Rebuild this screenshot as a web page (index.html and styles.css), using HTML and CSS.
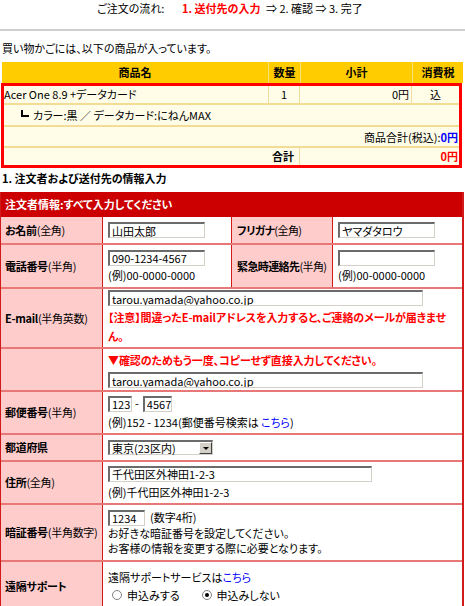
FILE: index.html
```html
<!DOCTYPE html>
<html lang="ja">
<head>
<meta charset="utf-8">
<title>ご注文</title>
<link rel="stylesheet" href="styles.css">
</head>
<body>
<div class="steps">
  <span class="steps-label">ご注文の流れ:</span>
  <span class="step-now">1. 送付先の入力</span>
  <span class="step">⇒ 2. 確認 ⇒ 3. 完了</span>
</div>
<div class="rule"></div>
<p class="cart-intro">買い物かごには、以下の商品が入っています。</p>
<div class="cart">
  <div class="cart-head">
    <div class="h-name">商品名</div>
    <div class="h-qty">数量</div>
    <div class="h-sub">小計</div>
    <div class="h-tax">消費税</div>
  </div>
  <div class="cart-body">
    <div class="row r-item">
      <div class="c-name">Acer One 8.9 +データカード</div>
      <div class="c-qty">1</div>
      <div class="c-sub">0円</div>
      <div class="c-tax">込</div>
    </div>
    <div class="row r-opt"><span class="corner"></span>カラー:黒 ／ データカード:にねんMAX</div>
    <div class="row r-sum">商品合計(税込):<b class="blue">0円</b></div>
    <div class="row r-total">
      <div class="t-label">合計</div>
      <div class="t-val">0円</div>
    </div>
  </div>
</div>

<h2 class="section">1. 注文者および送付先の情報入力</h2>
<div class="form">
  <div class="form-head">注文者情報:すべて入力してください</div>

  <div class="frow two r-name">
    <div class="lab"><b>お名前</b>(全角)</div>
    <div class="fld"><input class="in w-mid" value="山田太郎"></div>
    <div class="lab lab2"><b>フリガナ</b>(全角)</div>
    <div class="fld"><input class="in w-mid" value="ヤマダタロウ"></div>
  </div>

  <div class="frow two r-tel">
    <div class="lab"><b>電話番号</b>(半角)</div>
    <div class="fld"><input class="in w-mid" value="090-1234-4567"><div class="note">(例)00-0000-0000</div></div>
    <div class="lab lab2"><b>緊急時連絡先</b>(半角)</div>
    <div class="fld"><input class="in w-mid" value=""><div class="note">(例)00-0000-0000</div></div>
  </div>

  <div class="frow one r-mail">
    <div class="lab"><b>E-mail</b>(半角英数)</div>
    <div class="fld">
      <input class="in w-wide" value="tarou.yamada@yahoo.co.jp">
      <div class="warn">【注意】間違ったE-mailアドレスを入力すると、ご連絡のメールが届きませ<br>ん。</div>
    </div>
  </div>

  <div class="frow one r-conf">
    <div class="lab"></div>
    <div class="fld">
      <div class="warn">▼確認のためもう一度、コピーせず直接入力してください。</div>
      <input class="in w-wide" value="tarou.yamada@yahoo.co.jp">
    </div>
  </div>

  <div class="frow one r-zip">
    <div class="lab"><b>郵便番号</b>(半角)</div>
    <div class="fld">
      <div class="zip"><input class="in w-z1" value="123"><span class="dash">-</span><input class="in w-z2" value="4567"></div>
      <div class="note">(例)152 - 1234(郵便番号検索は <a class="link" href="#">こちら</a>)</div>
    </div>
  </div>

  <div class="frow one r-pref">
    <div class="lab"><b>都道府県</b></div>
    <div class="fld">
      <div class="select"><span class="sel-text">東京(23区内)</span><span class="sel-btn"><span class="sel-arrow"></span></span></div>
    </div>
  </div>

  <div class="frow one r-addr">
    <div class="lab"><b>住所</b>(全角)</div>
    <div class="fld">
      <input class="in w-addr" value="千代田区外神田1-2-3">
      <div class="note">(例)千代田区外神田1-2-3</div>
    </div>
  </div>

  <div class="frow one r-pin">
    <div class="lab"><b>暗証番号</b>(半角数字)</div>
    <div class="fld">
      <div class="pin"><input class="in w-pin" value="1234"><span class="pin-note">(数字4桁)</span></div>
      <div class="note">お好きな暗証番号を設定してください。</div>
      <div class="note">お客様の情報を変更する際に必要となります。</div>
    </div>
  </div>

  <div class="frow one r-remote">
    <div class="lab"><b>遠隔サポート</b></div>
    <div class="fld">
      <div class="note">遠隔サポートサービスは<a class="link" href="#">こちら</a></div>
      <div class="radios">
        <label class="radio"><span class="rb"></span>申込みする</label>
        <label class="radio"><span class="rb on"></span>申込みしない</label>
      </div>
    </div>
  </div>
</div>
</body>
</html>
```

FILE: styles.css
```css
* { box-sizing: border-box; }
html, body { margin: 0; padding: 0; background: #fff; }
body {
  font-family: "Noto Sans CJK JP", "Noto Sans", sans-serif;
  font-size: 11px;
  line-height: 15px;
  color: #000;
  font-feature-settings: "palt";
  width: 465px;
  overflow: hidden;
}
b { font-weight: bold; }

.steps {
  height: 29px;
  padding: 1px 0 0 97px;
  display: flex;
  white-space: nowrap;
}
.steps-label { width: 85px; }
.step-now { color: #ff0000; font-weight: bold; width: 84px; }

.rule { height: 2px; background: #cfcfcf; }

.cart-intro { margin: 10px 0 0 2px; height: 21px; }

.cart { width: 463px; }
.cart-head {
  margin-left: 2px;
  height: 21px;
  background: #ffcc00;
  display: grid;
  grid-template-columns: 266px 32px 112px 1fr;
  font-weight: bold;
  text-align: center;
  line-height: 21px;
}
.h-qty, .h-sub, .h-tax { border-left: 1px solid #fbe07a; }

.cart-body {
  margin-left: 1px;
  width: 461px;
  border: 3px solid #ff0000;
  background: #fffde8;
}
.row { border-bottom: 2px solid #f3dc96; }
.row:last-child { border-bottom: none; }
.r-item {
  display: grid;
  grid-template-columns: 264px 32px 112px 1fr;
  height: 19px;
  line-height: 17px;
}
.c-name { white-space: nowrap; }
.c-qty { text-align: center; border-left: 1px solid #f0dca0; border-right: 1px solid #f0dca0; }
.c-sub { text-align: right; padding-right: 2px; border-right: 1px solid #f0dca0; }
.c-tax { text-align: center; }
.r-opt {
  height: 22px;
  line-height: 20px;
  padding-left: 17px;
  display: flex;
  align-items: center;
}
.corner {
  display: inline-block;
  width: 8px;
  height: 7px;
  border-left: 2px solid #000;
  border-bottom: 2px solid #000;
  margin: 0 4px 3px 0;
}
.r-sum { height: 21px; line-height: 20px; text-align: right; padding-right: 1px; }
.blue { color: #0000ff; }
.r-total {
  display: grid;
  grid-template-columns: 296px 1fr;
  height: 17px;
  line-height: 17px;
  font-weight: bold;
}
.t-label { text-align: right; padding-right: 5px; border-right: 1px solid #f0dca0; }
.t-val { text-align: right; color: #ff0000; padding-right: 1px; }

.section {
  margin: 2px 0 0 2px;
  height: 22px;
  font-size: 11px;
  line-height: 16px;
  font-weight: bold;
}

.form {
  width: 464px;
  border-left: 1px solid #d21a1a;
  border-right: 2px solid #d21a1a;
}
.form-head {
  height: 25px;
  background: #cc0000;
  color: #fff;
  font-weight: bold;
  line-height: 25px;
  padding-left: 4px;
}
.frow {
  display: grid;
  border-bottom: 2px solid #e87777;
}
.frow.two { grid-template-columns: 102px 129px 101px 1fr; }
.frow.one { grid-template-columns: 102px 1fr; }
.lab {
  background: #ffcccc;
  display: flex;
  align-items: center;
  padding-left: 4px;
  border-right: 1px solid #d21a1a;
  white-space: nowrap;
  letter-spacing: -0.3px;
}
.lab2 { padding-left: 5px; letter-spacing: -0.6px; }
.fld {
  padding: 0 0 0 5px;
  display: flex;
  flex-direction: column;
  justify-content: center;
  border-right: 1px solid #d21a1a;
}
.fld:last-child { border-right: none; }

.r-name { height: 28px; }
.r-tel { height: 44px; }
.r-mail { height: 60px; }
.r-conf { height: 43px; }
.r-zip { height: 43px; }
.r-pref { height: 27px; }
.r-addr { height: 43px; }
.r-pin { height: 57px; }
.r-remote { height: 48px; border-bottom: none; }

.in {
  display: block;
  height: 16px;
  margin: 0;
  padding: 0 0 0 2px;
  font: inherit;
  font-feature-settings: "palt";
  line-height: 13px;
  color: #000;
  background: #fff;
  border-style: solid;
  border-width: 2px 1px 1px 2px;
  border-color: #6b6b6b #d4d0c8 #d4d0c8 #6b6b6b;
  outline: none;
}
.w-mid { width: 97px; }
.w-wide { width: 315px; }
.w-addr { width: 264px; }
.w-z1 { width: 24px; }
.w-z2 { width: 29px; }
.w-pin { width: 37px; }

.note { line-height: 15px; white-space: nowrap; }
.r-tel .note { margin-top: 2px; }
.r-zip .note { margin-top: 3px; }
.r-addr .note { margin-top: 3px; }
.warn {
  color: #ff0000;
  font-weight: bold;
  line-height: 19px;
  white-space: nowrap;
  letter-spacing: -0.1px;
}
.r-mail .warn { margin-top: 2px; }
.r-conf .warn { margin-bottom: 2px; }

.zip, .pin { display: flex; align-items: center; }
.dash { margin: 0 4px 0 3px; }
.pin-note { margin-left: 5px; }
.link { color: #0000ff; text-decoration: none; }

.select {
  width: 105px;
  height: 15px;
  display: flex;
  border-style: solid;
  border-width: 2px 1px 1px 2px;
  border-color: #6b6b6b #d4d0c8 #d4d0c8 #6b6b6b;
  background: #fff;
}
.sel-text { flex: 1; padding-left: 2px; line-height: 12px; white-space: nowrap; }
.sel-btn {
  width: 13px;
  background: #d4d0c8;
  border-style: solid;
  border-width: 1px;
  border-color: #fff #404040 #404040 #fff;
  display: flex;
  align-items: center;
  justify-content: center;
}
.sel-arrow {
  width: 0; height: 0;
  border-left: 3px solid transparent;
  border-right: 3px solid transparent;
  border-top: 3px solid #000;
}

.radios { display: flex; gap: 22px; padding-left: 4px; margin-top: 3px; }
.radio { display: flex; align-items: center; gap: 5px; }
.rb {
  width: 10px; height: 10px;
  border-radius: 50%;
  border: 1px solid #808080;
  background: #fff;
  position: relative;
}
.rb.on::after {
  content: "";
  position: absolute;
  left: 2px; top: 2px;
  width: 4px; height: 4px;
  border-radius: 50%;
  background: #000;
}
```
